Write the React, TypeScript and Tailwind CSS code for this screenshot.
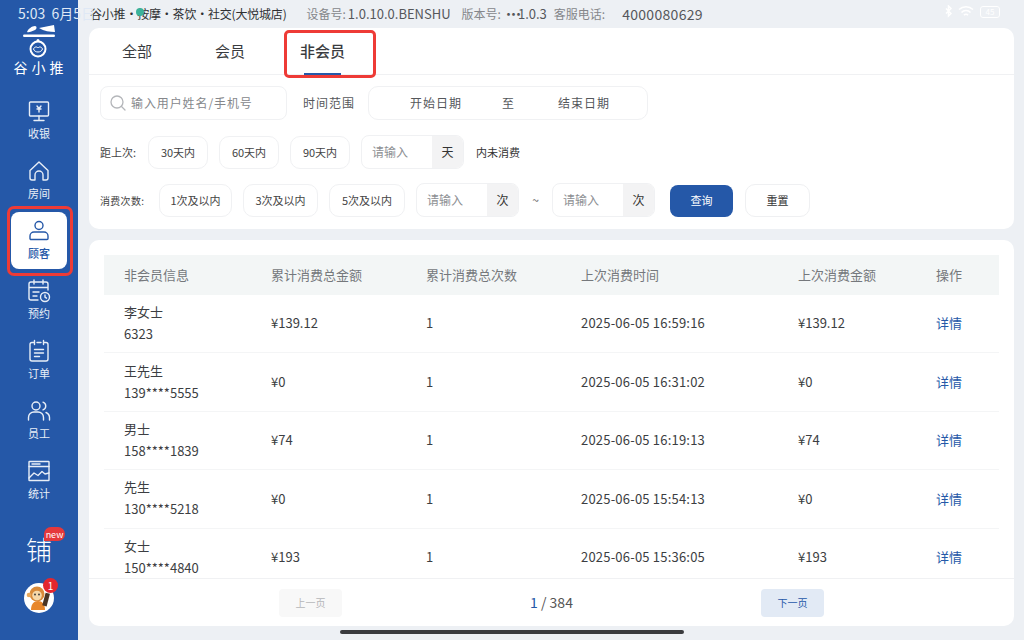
import type { ReactNode } from "react"

const FONT = "font-['Noto_Sans_CJK_SC','Noto_Sans',sans-serif]"

const rows = [
  { name: "李女士", phone: "6323", total: "¥139.12", count: "1", time: "2025-06-05 16:59:16", last: "¥139.12" },
  { name: "王先生", phone: "139****5555", total: "¥0", count: "1", time: "2025-06-05 16:31:02", last: "¥0" },
  { name: "男士", phone: "158****1839", total: "¥74", count: "1", time: "2025-06-05 16:19:13", last: "¥74" },
  { name: "先生", phone: "130****5218", total: "¥0", count: "1", time: "2025-06-05 15:54:13", last: "¥0" },
  { name: "女士", phone: "150****4840", total: "¥193", count: "1", time: "2025-06-05 15:36:05", last: "¥193" },
]

function NavIcon({ children }: { children: ReactNode }) {
  return (
    <svg width="26" height="26" viewBox="0 0 26 26" fill="none" stroke="currentColor" strokeWidth="1.4" strokeLinecap="round" strokeLinejoin="round">
      {children}
    </svg>
  )
}

const navItems: { label: string; active?: boolean; icon: ReactNode }[] = [
  {
    label: "收银",
    icon: (
      <>
        <rect x="3.5" y="4" width="19" height="14" rx="1" />
        <path d="M13 18v4M8 22.500h10M11 8l2 2.500 2-2.500M13 10.500v3.500M11 11h4" />
      </>
    ),
  },
  {
    label: "房间",
    icon: <path d="M4 12.500 13 4l9 8.500V20a2 2 0 0 1-2 2h-3v-5a4 4 0 0 0-8 0v5H6a2 2 0 0 1-2-2z" />,
  },
  {
    label: "顾客",
    active: true,
    icon: (
      <>
        <circle cx="13" cy="7.500" r="4" />
        <path d="M8 14h10a4 4 0 0 1 4 4v2.500a1 1 0 0 1-1 1H5a1 1 0 0 1-1-1V18a4 4 0 0 1 4-4z" />
      </>
    ),
  },
  {
    label: "预约",
    icon: (
      <>
        <path d="M12 22H5a2 2 0 0 1-2-2V6a2 2 0 0 1 2-2h15a2 2 0 0 1 2 2v6M3 9.500h19M8 2v4M17 2v4M7 14h6M7 18h4" />
        <circle cx="19" cy="19" r="4.500" />
        <path d="M19 17v2.200l1.500 1" />
      </>
    ),
  },
  {
    label: "订单",
    icon: (
      <>
        <path d="M8 4.500H6a2 2 0 0 0-2 2V21a2 2 0 0 0 2 2h14a2 2 0 0 0 2-2V6.500a2 2 0 0 0-2-2h-2" />
        <path d="M8.500 2.500v4M17.500 2.500v4M11 4.500h4M8.500 11.500h9M8.500 15h9M8.500 18.500h5" />
      </>
    ),
  },
  {
    label: "员工",
    icon: (
      <>
        <circle cx="10" cy="8" r="4" />
        <path d="M2.500 22v-2.500A5.500 5.500 0 0 1 8 14h4a5.500 5.500 0 0 1 5.500 5.500V22M17 4.200a4 4 0 0 1 0 7.600M20 14.500a5.500 5.500 0 0 1 3.500 5V22" />
      </>
    ),
  },
  {
    label: "统计",
    icon: (
      <>
        <rect x="3" y="3.500" width="20" height="19" rx="0.500" />
        <path d="M3 8.500h20M6 6h8M3 20l5-5 4 2.500 4-4 3 2.500 4-1" />
      </>
    ),
  },
]

function Logo() {
  return (
    <div className="flex h-[64px] flex-col items-center text-white">
      <svg width="36" height="36" viewBox="0 0 36 36" fill="white" className="mt-[-4px] shrink-0">
        <path d="M6 8c1-3 5-6 8-6 2 0 2 3 0 4-3 1-6 3-8 2zM18 4l15-3 1 7c-5 0-11-1-16-4z" />
        <rect x="2" y="10.500" width="32" height="2.400" rx="1.200" />
        <circle cx="17" cy="25" r="7.500" fill="none" stroke="white" strokeWidth="2" />
        <circle cx="17" cy="16.500" r="1.500" />
        <path d="M12.500 25c1-2.500 3.500-2.500 4.500-1 1-1.500 3.500-1.500 4.500 1-1 4-8 4-9 0z" fill="none" stroke="white" strokeWidth="1" />
      </svg>
      <div className="pl-[3px] text-[14px] leading-[14px] tracking-[4px] whitespace-nowrap">谷小推</div>
    </div>
  )
}

function Sidebar() {
  return (
    <aside className="flex h-full w-[78px] shrink-0 flex-col items-center bg-[#2558a8] pt-[28px] text-[#e8eef7]">
      <Logo />
      {navItems.map((item) => (
        <div
          key={item.label}
          className={`flex w-[56px] flex-col items-center pt-[6px] ${item.active ? "mb-[3px] h-[57px] rounded-[8px] bg-white text-[#2558a8]" : "h-[60px]"}`}
        >
          <NavIcon>{item.icon}</NavIcon>
          <span className={`mt-[1px] text-[11px] leading-[16px] ${item.active ? "font-medium" : ""}`}>{item.label}</span>
        </div>
      ))}
      <div className="relative mt-[19px] flex h-[36px] w-[26px] items-center justify-center">
        <span className="text-[26px] leading-[30px] font-light text-white">铺</span>
        <span className="absolute top-[-4px] left-[18px] flex h-[14px] w-[21px] items-center justify-center rounded-full rounded-bl-none bg-[#e5383b] text-[9px] leading-none text-white">new</span>
      </div>
      <div className="relative mt-[16px] h-[30px] w-[30px]">
        <svg width="30" height="30" viewBox="0 0 30 30">
          <circle cx="15" cy="15" r="15" fill="white" />
          <circle cx="13" cy="11" r="7.500" fill="#d98a3a" />
          <circle cx="13" cy="12.500" r="4.800" fill="#f6d7a8" />
          <circle cx="5" cy="12" r="2.300" fill="#e9a85a" />
          <path d="M7 27c0-6 3-9 7-9s7 3 7 9z" fill="#e8862a" />
          <rect x="20" y="10" width="4.500" height="13" fill="#4a3424" transform="rotate(15 22 16)" />
          <circle cx="11" cy="11.500" r="0.900" fill="#333" />
          <circle cx="15" cy="11.500" r="0.900" fill="#333" />
        </svg>
        <span className="absolute top-[-5px] right-[-4px] flex h-[15px] w-[15px] items-center justify-center rounded-full bg-[#e3262e] text-[10px] leading-none text-white">1</span>
      </div>
    </aside>
  )
}

function Chip({ children, w }: { children: ReactNode; w: string }) {
  return (
    <div className={`flex h-[33px] ${w} items-center justify-center rounded-[10px] border border-[#f0f1f3] text-[11px] text-[#444]`}>
      {children}
    </div>
  )
}

function UnitInput({ unit }: { unit: string }) {
  return (
    <div className="flex h-[34px] w-[103px] overflow-hidden rounded-[8px] border border-[#f0f1f3]">
      <div className="flex flex-1 items-center pl-[10px] text-[12px] text-[#8d8f93]">请输入</div>
      <div className="flex w-[31px] items-center justify-center bg-[#f3f3f4] text-[12px] text-[#333]">{unit}</div>
    </div>
  )
}

function Filters() {
  return (
    <div className="flex flex-col px-[11px] pt-[11px]">
      <div className="flex h-[34px] items-center">
        <div className="flex h-[34px] w-[187px] items-center rounded-[8px] border border-[#f0f1f3] pl-[8px]">
          <svg width="18" height="18" viewBox="0 0 18 18" fill="none" stroke="#b4b6ba" strokeWidth="1.300" strokeLinecap="round">
            <circle cx="8" cy="8" r="6" />
            <path d="M12.500 12.500 16 16" />
          </svg>
          <span className="ml-[4px] text-[12px] tracking-[0.900px] whitespace-nowrap text-[#85878b]">输入用户姓名/手机号</span>
        </div>
        <span className="ml-[16px] text-[12px] tracking-[1px] text-[#55575b]">时间范围</span>
        <div className="ml-[13px] flex h-[34px] w-[280px] items-center rounded-[10px] border border-[#f0f1f3] text-[12px] tracking-[1px] text-[#55575b]">
          <span className="ml-[41px]">开始日期</span>
          <span className="ml-[40px]">至</span>
          <span className="ml-[43px]">结束日期</span>
        </div>
      </div>
      <div className="mt-[15px] flex h-[34px] items-center">
        <span className="w-[48px] text-[11px] text-[#444]">距上次:</span>
        <div className="flex items-center gap-[11px]">
          <Chip w="w-[60px]">30天内</Chip>
          <Chip w="w-[60px]">60天内</Chip>
          <Chip w="w-[60px]">90天内</Chip>
        </div>
        <div className="ml-[11px]"><UnitInput unit="天" /></div>
        <span className="ml-[12px] text-[11px] text-[#333]">内未消费</span>
      </div>
      <div className="mt-[14px] flex h-[34px] items-center">
        <span className="w-[59px] text-[10px] tracking-[0.300px] text-[#444]">消费次数:</span>
        <div className="flex items-center gap-[11px]">
          <Chip w="w-[73px]">1次及以内</Chip>
          <Chip w="w-[75px]">3次及以内</Chip>
          <Chip w="w-[76px]">5次及以内</Chip>
        </div>
        <div className="ml-[11px]"><UnitInput unit="次" /></div>
        <span className="w-[33px] text-center text-[12px] text-[#666]">~</span>
        <UnitInput unit="次" />
        <button className="mt-[1px] ml-[15px] h-[32px] w-[63px] rounded-[8px] bg-[#2558a8] text-[11px] text-white">查询</button>
        <button className="mt-[1px] ml-[12px] h-[33px] w-[65px] rounded-[10px] border border-[#eff0f2] text-[11px] text-[#333]">重置</button>
      </div>
    </div>
  )
}

const colClass = "grid grid-cols-[147px_155px_155px_217px_138px_1fr] items-center pl-[20px]"

function CustomerTable() {
  return (
    <div className="flex min-h-0 flex-1 flex-col overflow-hidden px-[15px] pt-[15px]">
      <div className={`${colClass} h-[40px] shrink-0 bg-[#f3f6f6] text-[13px] text-[#75787c]`}>
        <span>非会员信息</span>
        <span>累计消费总金额</span>
        <span>累计消费总次数</span>
        <span>上次消费时间</span>
        <span>上次消费金额</span>
        <span>操作</span>
      </div>
      {rows.map((r) => (
        <div key={r.phone} className={`${colClass} h-[58.400px] shrink-0 border-b border-[#f4f5f6] pb-[1px] text-[13px] text-[#3c3e42]`}>
          <div className="flex flex-col gap-[2px] leading-[20px]">
            <span>{r.name}</span>
            <span>{r.phone}</span>
          </div>
          <span>{r.total}</span>
          <span>{r.count}</span>
          <span className="tracking-[0.200px]">{r.time}</span>
          <span>{r.last}</span>
          <span className="text-[#2558a8]">详情</span>
        </div>
      ))}
    </div>
  )
}

function Pager() {
  return (
    <div className="grid h-[48px] shrink-0 grid-cols-[190px_63px_419px_63px] items-center border-t border-[#f0f1f3]">
      <span />
      <div className="flex h-[28px] items-center justify-center rounded-[4px] bg-[#f8f8f8] text-[10px] text-[#b5b6b8]">上一页</div>
      <div className="text-center text-[14px] text-[#555]">
        <span className="text-[#2558a8]">1</span> / 384
      </div>
      <div className="flex h-[28px] items-center justify-center rounded-[4px] bg-[#e2eaf5] text-[10px] text-[#2558a8]">下一页</div>
    </div>
  )
}

export default function App() {
  return (
    <div className={`${FONT} relative flex h-[640px] w-[1024px] overflow-hidden bg-[#edf0f4]`}>
      <Sidebar />
      <main className="flex min-w-0 flex-1 flex-col pr-[10px] pb-[14px] pl-[11px]">
        <header className="flex h-[28px] shrink-0 items-center pl-[1px] text-[12px] whitespace-nowrap text-[#85878b]">
          <span className="tracking-[-0.200px] text-[#2f3033]">谷小推·按摩·茶饮·社交(大悦城店)</span>
          <span className="ml-[20px]">设备号:<span className="ml-[2px] text-[13px] text-[#55575b]">1.0.10.0.BENSHU</span></span>
          <span className="ml-[11px]">版本号:<span className="ml-[1px] text-[13px] tracking-[-8px] text-[#55575b]">•••</span><span className="ml-[1px] text-[13px] text-[#55575b]">1.0.3</span></span>
          <span className="ml-[7px]">客服电话:</span>
          <span className="ml-[17px] text-[14px] tracking-[0.300px] text-[#55575b]">4000080629</span>
        </header>
        <section className="h-[201px] shrink-0 rounded-[10px] bg-white">
          <div className="flex h-[47px] items-center border-b border-[#f0f1f3] text-[15px] text-[#3a3c40]">
            <span className="ml-[33px]">全部</span>
            <span className="ml-[63px]">会员</span>
            <div className="relative ml-[55px] flex h-full items-center font-medium">
              非会员
              <span className="absolute bottom-[-1px] left-[4px] h-[2px] w-[37px] bg-[#2558a8]" />
            </div>
          </div>
          <Filters />
        </section>
        <section className="mt-[11px] flex min-h-0 flex-1 flex-col rounded-[10px] bg-white">
          <CustomerTable />
          <Pager />
        </section>
      </main>

      {/* status bar */}
      <div className="absolute top-[4px] left-[18px] text-[14px] leading-[18px] whitespace-nowrap text-[#dfe8f5]">5:03&nbsp; 6月5日</div>
      <div className="absolute top-[8px] left-[136px] h-[8px] w-[8px] rounded-full bg-[#3cb29a]" />
      <div className="absolute top-[5px] right-[24px] flex items-center gap-[5px]">
        <svg width="30" height="13" viewBox="0 0 30 13" fill="none" stroke="white" strokeWidth="1.500">
          <path d="M1 3.500 6 8.500 3.500 11V1L6 3.500 1 8.500" />
          <path d="M14 4.500a10 10 0 0 1 14 0M16.500 7.500a6 6 0 0 1 9 0M19 10.200a2.500 2.500 0 0 1 4 0" />
        </svg>
        <div className="flex h-[12px] w-[20px] items-center justify-center rounded-[3px] border border-white text-[8px] leading-none text-white">45</div>
      </div>
      {/* home indicator */}
      <div className="absolute top-[630px] left-[340px] h-[4px] w-[344px] rounded-full bg-[#3a3b3e]" />
      {/* red annotation boxes */}
      <div className="absolute top-[30px] left-[284px] h-[48px] w-[92px] rounded-[5px] border-[3px] border-[#ee3b36]" />
      <div className="absolute top-[206px] left-[7px] h-[70px] w-[66px] rounded-[7px] border-[3px] border-[#ee3b36]" />
    </div>
  )
}
